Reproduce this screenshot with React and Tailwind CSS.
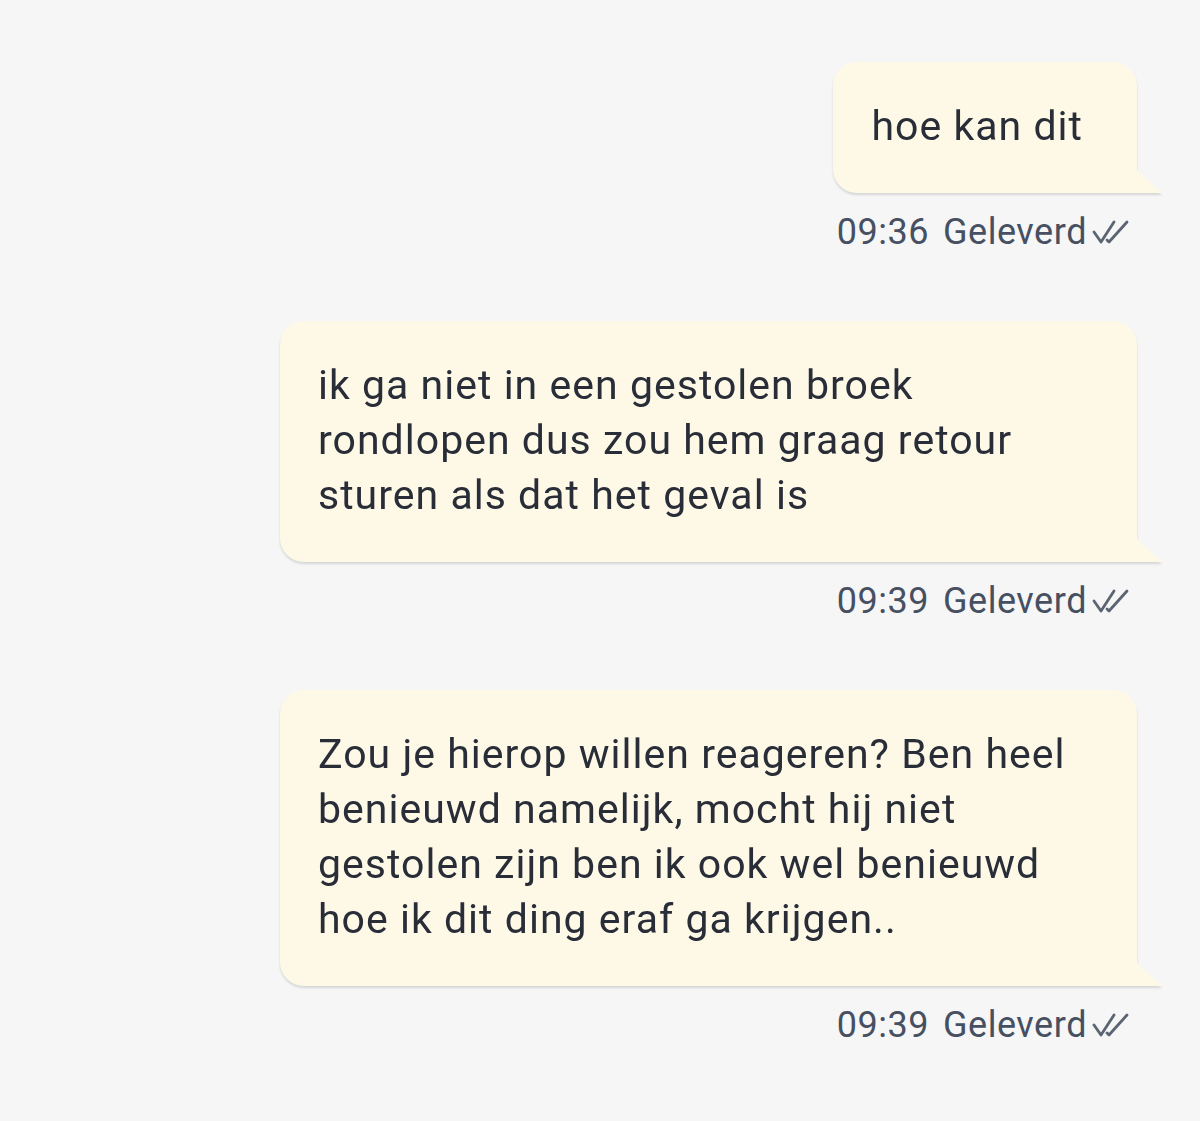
const messages = [
  { text: 'hoe kan dit', time: '09:36' },
  { text: 'ik ga niet in een gestolen broek rondlopen dus zou hem graag retour sturen als dat het geval is', time: '09:39' },
  { text: 'Zou je hierop willen reageren? Ben heel benieuwd namelijk, mocht hij niet gestolen zijn ben ik ook wel benieuwd hoe ik dit ding eraf ga krijgen..', time: '09:39' },
];

const DoubleCheck = () => (
  <svg width="40" height="28" viewBox="0 0 40 28" fill="none" stroke="#5b6472" strokeWidth="2.8" strokeLinecap="round" strokeLinejoin="round">
    <path d="M3 14 L10 24 L23 4" />
    <path d="M16 22 L18 24 L36 4" />
  </svg>
);

const Bubble = ({ text }) => (
  <div className="relative drop-shadow-[0_2px_1px_rgba(0,0,0,0.13)]">
    <div className="bg-[#fef9e6] rounded-[24px] rounded-br-none pl-[38px] pr-[54px] pt-[37px] pb-[39px] text-[41px] tracking-[0.025em] leading-[55px] text-[#282d38] max-w-[857px]">
      {text}
    </div>
    <svg className="absolute bottom-0 -right-[25px]" width="26" height="24" viewBox="0 0 26 24">
      <polygon points="0,0 26,24 0,24" fill="#fef9e6" />
    </svg>
  </div>
);

const App = () => {
  return (
    <div className="min-h-[1121px] bg-[#f6f6f6] pt-[62px] pr-[63px] font-['Roboto',sans-serif]">
      <div className="flex flex-col items-end">
        {messages.map((m, i) => (
          <div key={i} className="flex flex-col items-end mb-[69px]">
            <Bubble text={m.text} />
            <div className="flex items-center gap-[14px] mt-[19px] mr-[6px] text-[36px] tracking-[0.015em] text-[#475062] leading-[40px]">
              <span>{m.time}</span>
              <span className="flex items-center gap-[4px]">
                Geleverd
                <DoubleCheck />
              </span>
            </div>
          </div>
        ))}
      </div>
    </div>
  );
};

export default App;
